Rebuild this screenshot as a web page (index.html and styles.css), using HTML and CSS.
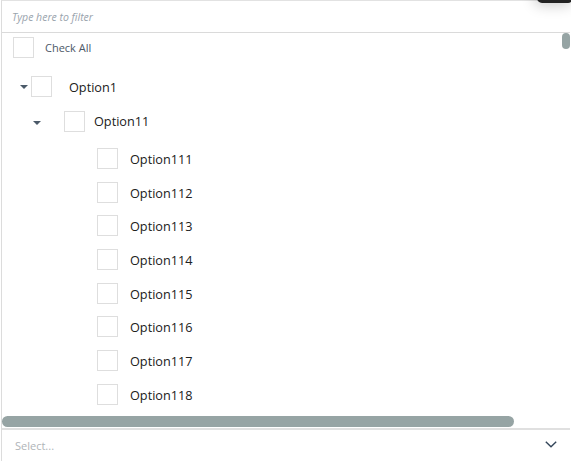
FILE: index.html
```html
<!DOCTYPE html>
<html>
<head>
<meta charset="utf-8">
<link rel="stylesheet" href="styles.css">
</head>
<body>
<div class="popup">
  <div class="filter">Type here to filter</div>
  <div class="list">
    <div class="tree">
      <div class="row checkall"><span class="box"></span><span class="label">Check All</span></div>
      <div class="row lvl1"><span class="toggle"></span><span class="box"></span><span class="label">Option1</span></div>
      <div class="row lvl2"><span class="toggle"></span><span class="box"></span><span class="label">Option11</span></div>
      <div class="row leaf"><span class="box"></span><span class="label">Option111</span></div>
      <div class="row leaf"><span class="box"></span><span class="label">Option112</span></div>
      <div class="row leaf"><span class="box"></span><span class="label">Option113</span></div>
      <div class="row leaf"><span class="box"></span><span class="label">Option114</span></div>
      <div class="row leaf"><span class="box"></span><span class="label">Option115</span></div>
      <div class="row leaf"><span class="box"></span><span class="label">Option116</span></div>
      <div class="row leaf"><span class="box"></span><span class="label">Option117</span></div>
      <div class="row leaf"><span class="box"></span><span class="label">Option118</span></div>
    </div>
    <div class="hscroll"><div class="hthumb"></div></div>
    <div class="vthumb"></div>
  </div>
  <div class="select">
    <span class="placeholder">Select...</span>
    <svg class="chev" width="12" height="7" viewBox="0 0 12 7"><path d="M0.8 0.8 L6 5.8 L11.2 0.8" fill="none" stroke="#34465a" stroke-width="1.4"/></svg>
  </div>
  <div class="corner"></div>
</div>
</body>
</html>
```
FILE: styles.css
```css
html, body {
  margin: 0;
  padding: 0;
  background: #fff;
  overflow: hidden;
}
body {
  font-family: "Open Sans", "Noto Sans", sans-serif;
  width: 571px;
  height: 461px;
}
.popup {
  position: relative;
  margin-left: 1px;
  width: 568px;
  height: 460px;
  border-left: 1px solid #dcdcdc;
  border-top: 1px solid #e2e2e2;
  display: flex;
  flex-direction: column;
}
.filter {
  height: 31px;
  border-bottom: 1px solid #dadada;
  padding-left: 10px;
  font-style: italic;
  font-size: 10.5px;
  line-height: 33px;
  color: #9aa4ad;
  flex: none;
}
.list {
  position: relative;
  height: 395px;
  display: flex;
  flex-direction: column;
  flex: none;
}
.tree {
  flex: 1;
  overflow: hidden;
}
.row {
  display: flex;
  align-items: center;
  height: 34px;
}
.box {
  width: 21px;
  height: 21px;
  box-sizing: border-box;
  border: 1px solid #dedede;
  background: #fff;
  flex: none;
}
.label {
  font-size: 12.7px;
  color: #202020;
  white-space: nowrap;
}
.checkall {
  height: 28px;
  padding-left: 11px;
}
.checkall .box { margin-right: 11px; }
.checkall .label {
  font-size: 11px;
  color: #4c5866;
}
.toggle {
  width: 0;
  height: 0;
  border-left: 4px solid transparent;
  border-right: 4px solid transparent;
  border-top: 4px solid #4b5a69;
  flex: none;
}
.lvl1 {
  height: 36px;
  margin-top: 7px;
  padding-left: 18px;
}
.lvl1 .toggle { margin-right: 3px; margin-top: 2px; }
.lvl1 .box { margin-right: 17px; }
.lvl1 .label { margin-top: 2px; }
.lvl2 {
  height: 37.5px;
  padding-left: 31px;
  align-items: flex-start;
  padding-top: 7px;
  box-sizing: border-box;
}
.lvl2 .toggle { margin-right: 23px; margin-top: 10px; }
.lvl2 .box { margin-right: 9px; }
.lvl2 .label { line-height: 21px; }
.leaf {
  padding-left: 95px;
  height: 33.7px;
}
.leaf .box { margin-right: 12px; }
.leaf .label { margin-top: 1px; }
.hscroll {
  height: 14px;
  flex: none;
  padding-top: 2px;
  box-sizing: border-box;
}
.hthumb {
  width: 512px;
  height: 11px;
  border-radius: 6px;
  background: #96a4a4;
}
.vthumb {
  position: absolute;
  right: 0;
  top: 0;
  width: 8px;
  height: 16px;
  border-radius: 4px;
  background: #96a4a4;
}
.select {
  flex: 1;
  border-top: 2px solid #e0e0e0;
  display: flex;
  align-items: center;
  justify-content: space-between;
  padding: 0 13px 0 13px;
}
.placeholder {
  font-size: 11px;
  color: #b0b4b8;
}
.chev {
  display: block;
  margin-top: -2px;
}
.corner {
  position: absolute;
  right: -3px;
  top: -21px;
  width: 36px;
  height: 23px;
  background: #222;
  border-radius: 5px;
  box-shadow: -2px 2px 14px rgba(0, 0, 0, 0.22);
}
```
